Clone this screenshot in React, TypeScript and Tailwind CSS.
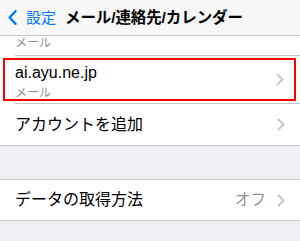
import React from "react";

function Chevron() {
  return (
    <svg width="8" height="13" viewBox="0 0 8 13" className="shrink-0">
      <polyline points="1.5,1.5 6.5,6.5 1.5,11.5" fill="none" stroke="#c7c7cc" strokeWidth="2" strokeLinecap="round" strokeLinejoin="round" />
    </svg>
  );
}

export default function App() {
  return (
    <div
      className="w-[300px] h-[241px] overflow-hidden bg-[#efeff4] text-black"
      style={{ fontFamily: '"Liberation Sans", "Noto Sans CJK JP", sans-serif' }}
    >
      {/* Header */}
      <div className="h-[36px] bg-[#f7f7f7] border-b border-[#c8c7cc] flex items-center pl-[8px]">
        <svg width="9" height="15" viewBox="0 0 9 15" className="shrink-0">
          <polyline points="7.5,1.2 1.6,7.5 7.5,13.8" fill="none" stroke="#007aff" strokeWidth="2.4" strokeLinecap="round" strokeLinejoin="round" />
        </svg>
        <span className="ml-[9px] text-[15px] leading-none text-[#007aff]">設定</span>
        <span className="ml-[9px] text-[15.5px] leading-none font-bold tracking-[-0.1px]">メール/連絡先/カレンダー</span>
      </div>

      {/* First group */}
      <div className="bg-white border-b border-[#c8c7cc]">
        <div className="h-[19px] pl-[15px] overflow-hidden">
          <div className="text-[12px] leading-[14px] text-[#8e8e93]">メール</div>
        </div>
        <div className="ml-[15px] h-px bg-[#c8c7cc]" />

        <div className="relative h-[47px] pl-[15px] pr-[16px] flex items-start">
          <div className="flex-1 pt-[7px]">
            <div className="text-[16px] leading-[19px]">ai.ayu.ne.jp</div>
            <div className="mt-[4px] text-[12px] leading-[14px] text-[#8e8e93]">メール</div>
          </div>
          <div className="self-center">
            <Chevron />
          </div>
          <div className="absolute left-[3px] top-[2px] w-[293px] h-[43px] border-2 border-[#ff0000]" />
        </div>
        <div className="ml-[15px] h-px bg-[#c8c7cc]" />

        <div className="h-[41px] pl-[15px] pr-[15px] flex items-center">
          <div className="flex-1 text-[16px] leading-none">アカウントを追加</div>
          <Chevron />
        </div>
      </div>

      <div className="h-[33px]" />

      {/* Second group */}
      <div className="bg-white border-y border-[#c8c7cc]">
        <div className="h-[40px] pl-[15px] pr-[15px] flex items-center">
          <div className="flex-1 text-[16px] leading-none">データの取得方法</div>
          <span className="mr-[11px] text-[15.5px] leading-none text-[#8e8e93]">オフ</span>
          <Chevron />
        </div>
      </div>
    </div>
  );
}
